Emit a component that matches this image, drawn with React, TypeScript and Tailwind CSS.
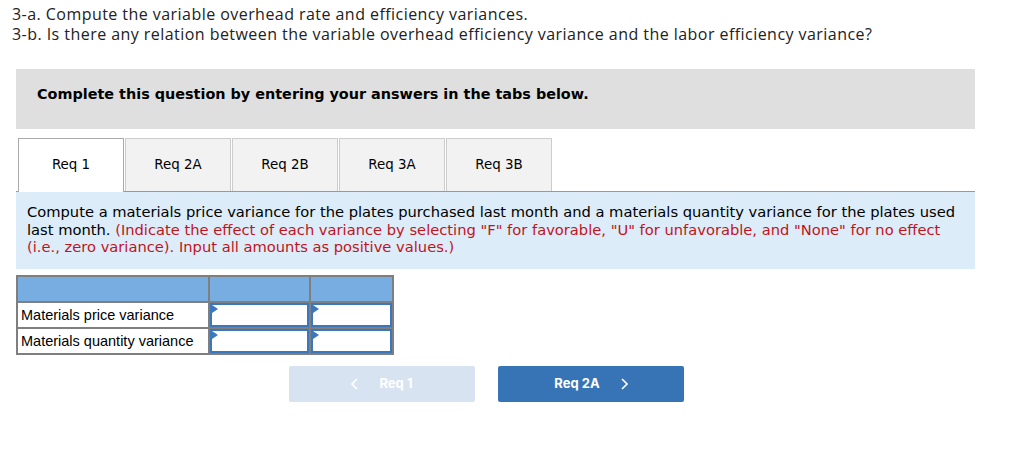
import React from 'react';

const tabs = ['Req 1', 'Req 2A', 'Req 2B', 'Req 3A', 'Req 3B'];
const rows = ['Materials price variance', 'Materials quantity variance'];

const InputCell: React.FC = () => (
  <td className="border-2 border-[#7f7f7f] p-0 h-[26px]">
    <div className="relative h-full w-full border-2 border-[#3a77bd] bg-white">
      <span className="absolute left-0 top-0 h-0 w-0 border-y-[4px] border-l-[6px] border-y-transparent border-l-[#3a77bd]" />
    </div>
  </td>
);

export default function App() {
  return (
    <div className="w-[1024px] h-[458px] bg-white overflow-hidden">
      {/* Question text */}
      <div className="pl-3 pt-[4px] text-[16px] tracking-[0.45px] leading-[20px] text-[#222] font-['Open_Sans',sans-serif]">
        <p>3-a. Compute the variable overhead rate and efficiency variances.</p>
        <p>3-b. Is there any relation between the variable overhead efficiency variance and the labor efficiency variance?</p>
      </div>

      <div className="ml-4 w-[959px] mt-[25px] font-['DejaVu_Sans',Verdana,sans-serif]">
        {/* Banner */}
        <div className="h-[60px] bg-[#dfdfdf] pl-[21px] pt-[16px]">
          <p className="text-[14.4px] leading-[18px] font-bold text-black">Complete this question by entering your answers in the tabs below.</p>
        </div>

        {/* Tabs */}
        <div className="mt-[9px] flex gap-[1px] pl-[2px] border-b border-[#999]">
          {tabs.map((t, i) => (
            <div
              key={t}
              className={
                i === 0
                  ? 'w-[106px] h-[54px] -mb-px flex items-center justify-center bg-white border border-b-0 border-[#aaa] text-[13.4px] text-black'
                  : 'w-[106px] h-[53px] flex items-center justify-center bg-[#f2f2f2] border border-b-0 border-[#ccc] text-[13.4px] text-black'
              }
            >
              {t}
            </div>
          ))}
        </div>

        {/* Instructions */}
        <div className="h-[77px] bg-[#dcecf8] pl-[11px] pr-[10px] pt-[11px] text-[14.7px] leading-[17.7px] text-black">
          Compute a materials price variance for the plates purchased last month and a materials quantity variance for the plates used last month.{' '}
          <span className="text-[#c0141c]">
            (Indicate the effect of each variance by selecting "F" for favorable, "U" for unfavorable, and "None" for no effect (i.e., zero variance). Input all amounts as positive values.)
          </span>
        </div>

        {/* Table */}
        <table className="mt-[6px] border-collapse font-['Liberation_Sans',Arial,sans-serif] text-[14.5px] text-black">
          <tbody>
            <tr className="h-[26px] bg-[#78ade2]">
              <td className="border-2 border-[#7f7f7f] w-[192px]" />
              <td className="border-2 border-[#7f7f7f] w-[101px]" />
              <td className="border-2 border-[#7f7f7f] w-[83px]" />
            </tr>
            {rows.map((r) => (
              <tr key={r} className="h-[26px]">
                <td className="border-2 border-[#7f7f7f] px-[3px] pt-[1px] whitespace-nowrap">{r}</td>
                <InputCell />
                <InputCell />
              </tr>
            ))}
          </tbody>
        </table>

        {/* Navigation */}
        <div className="mt-[11px] flex gap-[23px] pl-[273px] font-['Inter',sans-serif] text-[13px] font-bold">
          <button className="w-[186px] h-[36px] rounded-[2px] bg-[#d7e3f1] text-white flex items-center justify-center gap-[21px]">
            <svg width="7" height="12" viewBox="0 0 7 12" fill="none" stroke="white" strokeWidth="1.6">
              <path d="M6 1 L1 6 L6 11" />
            </svg>
            <span>Req 1</span>
          </button>
          <button className="w-[186px] h-[36px] rounded-[2px] bg-[#3774b6] text-white flex items-center justify-center gap-[21px]">
            <span>Req 2A</span>
            <svg width="7" height="12" viewBox="0 0 7 12" fill="none" stroke="white" strokeWidth="1.6">
              <path d="M1 1 L6 6 L1 11" />
            </svg>
          </button>
        </div>
      </div>
    </div>
  );
}
